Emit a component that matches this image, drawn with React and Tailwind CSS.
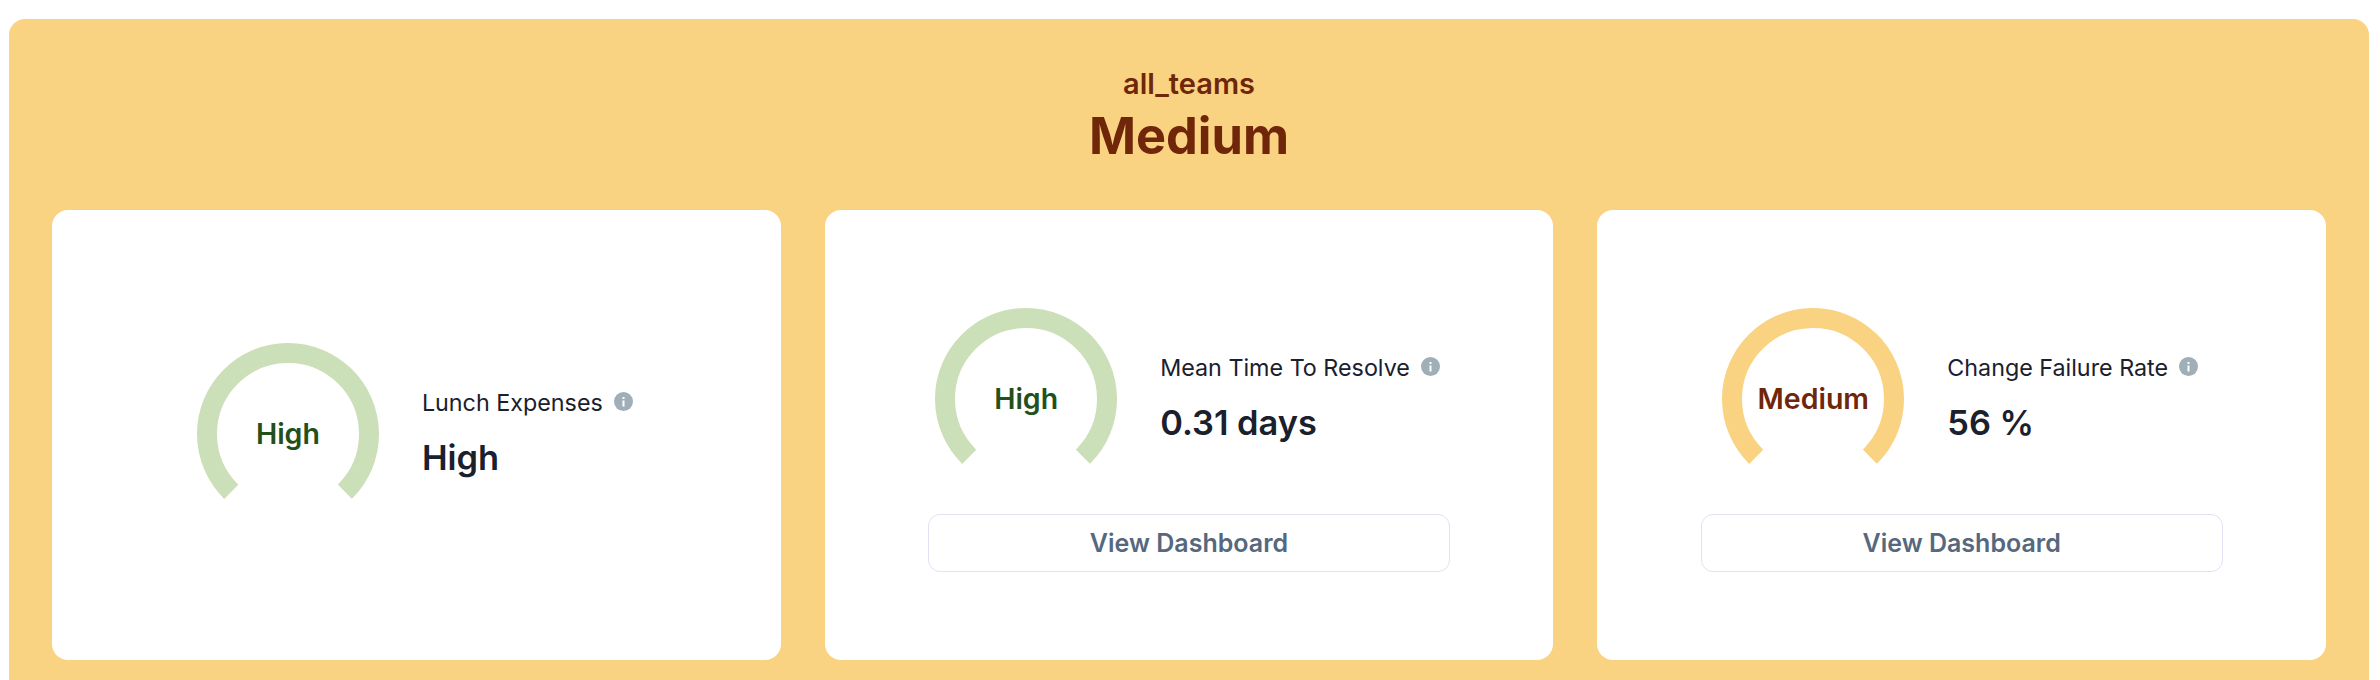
import React from 'react';

const tones = {
  High: { ring: '#CBDFB8', text: 'text-[#23501A]' },
  Medium: { ring: '#F9D282', text: 'text-[#6F2609]' },
};

const Gauge = ({ level }) => {
  const tone = tones[level];
  return (
    <div className="relative w-[182px] h-[182px] shrink-0">
      <svg width="182" height="182" viewBox="0 0 182 182" fill="none">
        <circle
          cx="91"
          cy="91"
          r="81"
          stroke={tone.ring}
          strokeWidth="20"
          pathLength="360"
          strokeDasharray="271 89"
          transform="rotate(134.5 91 91)"
        />
      </svg>
      <div className={`absolute inset-0 pt-px flex items-center justify-center text-[28.5px] font-semibold ${tone.text}`}>
        {level}
      </div>
    </div>
  );
};

const InfoIcon = () => (
  <svg width="19" height="19" viewBox="0 0 19 19" className="ml-[11px] mb-1 shrink-0">
    <circle cx="9.5" cy="9.5" r="9.5" fill="#A0AEB8" />
    <rect x="8.5" y="8.5" width="2" height="6" fill="#fff" />
    <rect x="8.5" y="5" width="2" height="2" fill="#fff" />
  </svg>
);

const MetricCard = ({ level, title, value, dashboard }) => (
  <div className={`flex-1 h-[450px] bg-white rounded-2xl flex flex-col items-center justify-center ${dashboard ? 'pt-[10px]' : 'pb-[2px]'}`}>
    <div className="flex items-center gap-[43px] pr-[3px]">
      <Gauge level={level} />
      <div className="flex flex-col gap-4">
        <div className="flex items-center text-[23.3px] leading-8 text-[#1A202C]">
          {title}
          <InfoIcon />
        </div>
        <div className="text-[34.4px] leading-[46px] font-semibold text-[#1A202C]">{value}</div>
      </div>
    </div>
    {dashboard && (
      <button className="mt-6 pt-px w-[522px] h-[58px] border border-[#E2E1F3] rounded-xl text-[25px] font-semibold text-[#56687D] bg-white">
        View Dashboard
      </button>
    )}
  </div>
);

const App = () => {
  return (
    <div className="h-[680px] w-full overflow-hidden bg-white pt-[19px] pl-[9px] pr-[11px] font-['Inter',sans-serif]">
      <div className="h-[700px] bg-[#F9D282] rounded-2xl px-[43px] pt-[45px]">
        <div className="flex flex-col items-center text-[#6F2609]">
          <div className="text-[29px] leading-[40px] font-semibold">all_teams</div>
          <div className="mt-[3px] text-[50.5px] leading-[58px] font-bold">Medium</div>
        </div>
        <div className="flex gap-11 mt-[45px]">
          <MetricCard level="High" title="Lunch Expenses" value="High" />
          <MetricCard level="High" title="Mean Time To Resolve" value="0.31 days" dashboard />
          <MetricCard level="Medium" title="Change Failure Rate" value="56 %" dashboard />
        </div>
      </div>
    </div>
  );
};

export default App;
